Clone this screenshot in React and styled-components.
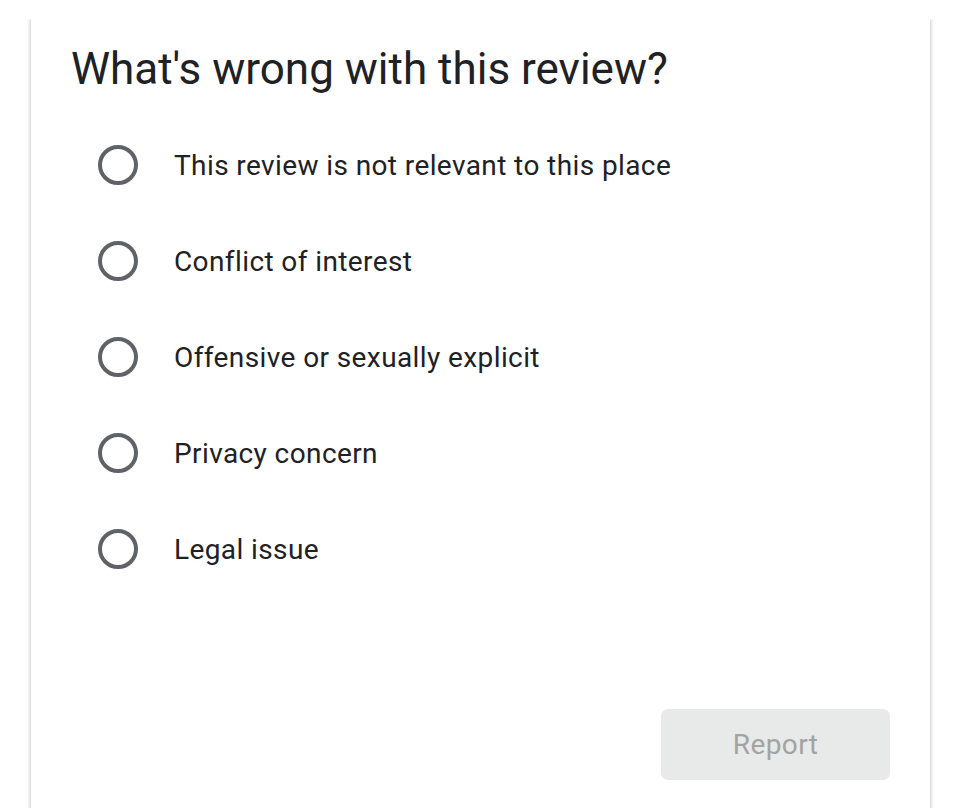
import React from "react";
import styled, { createGlobalStyle } from "styled-components";

const Global = createGlobalStyle`
  html, body { margin: 0; padding: 0; background: #ffffff; }
  body { font-family: Roboto, "Noto Sans", Arial, sans-serif; }
`;

const Page = styled.div`
  width: 960px;
  height: 808px;
  overflow: hidden;
  padding: 19px 30px 0 31px;
  box-sizing: border-box;
`;

const Card = styled.div`
  background: #fff;
  height: 820px;
  box-shadow: -1px 0 4px rgba(0,0,0,0.16), 1px 0 4px rgba(0,0,0,0.16);
  clip-path: inset(0 -10px 0 -10px);
  padding: 24px 40px 0 40px;
  box-sizing: border-box;
  display: flex;
  flex-direction: column;
`;

const Title = styled.h1`
  margin: 0;
  font-family: Roboto, sans-serif;
  font-weight: 400;
  font-size: 44px;
  line-height: 52px;
  color: #202124;
`;

const Options = styled.div`
  display: flex;
  flex-direction: column;
  margin-top: 22px;
  padding-left: 27px;
`;

const Option = styled.label`
  display: flex;
  align-items: center;
  height: 96px;
  gap: 36px;
  cursor: pointer;
`;

const Circle = styled.span`
  width: 40px;
  height: 40px;
  border-radius: 50%;
  border: 4px solid #5f6368;
  box-sizing: border-box;
  flex: none;
`;

const Label = styled.span`
  font-family: Roboto, sans-serif;
  font-size: 28px;
  color: #202124;
  letter-spacing: 0.4px;
`;

const Footer = styled.div`
  display: flex;
  justify-content: flex-end;
  margin-top: 112px;
`;

const Button = styled.button`
  width: 229px;
  height: 71px;
  border: none;
  border-radius: 7px;
  background: #e8e9e9;
  color: #a3a3a3;
  font-family: Roboto, sans-serif;
  font-size: 28px;
  font-weight: 400;
  letter-spacing: 0.4px;
  padding: 0;
`;

const options = [
  "This review is not relevant to this place",
  "Conflict of interest",
  "Offensive or sexually explicit",
  "Privacy concern",
  "Legal issue",
];

export default function App() {
  return (
    <>
      <Global />
      <Page>
        <Card>
          <Title>What's wrong with this review?</Title>
          <Options>
            {options.map((o) => (
              <Option key={o}>
                <Circle />
                <Label>{o}</Label>
              </Option>
            ))}
          </Options>
          <Footer>
            <Button disabled>Report</Button>
          </Footer>
        </Card>
      </Page>
    </>
  );
}
